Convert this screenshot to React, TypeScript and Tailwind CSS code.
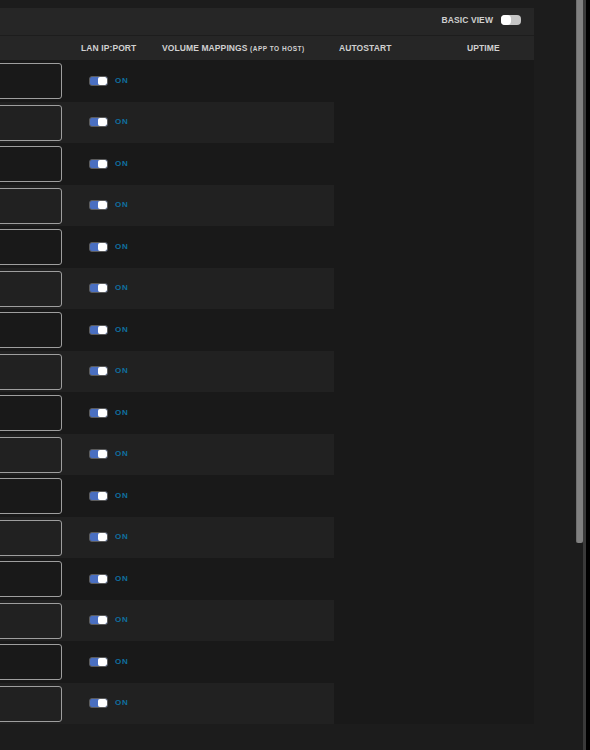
import React from "react";

const font = { fontFamily: '"Liberation Sans", Arial, sans-serif' };

const rows = Array.from({ length: 16 }, (_, i) => i);

function OnSwitch() {
  return (
    <div className="flex items-center">
      <div className="flex h-[10px] w-[19px] justify-end overflow-hidden rounded-[3px] border border-[#5c5c5c] bg-[#4a6fc1]">
        <div className="h-full w-[9px] rounded-[2px] bg-white" />
      </div>
      <span className="ml-[7px] text-[8px] font-bold tracking-[0.8px] text-[#0f6fa0]">ON</span>
    </div>
  );
}

function ContainerRow({ index }: { index: number }) {
  const shaded = index % 2 === 1;

  return (
    <div className="flex h-[41.5px]">
      <div className={`flex w-[334px] ${shaded ? "bg-[#212121]" : "bg-[#191919]"}`}>
        {/* name cell, mostly scrolled off to the left */}
        <div className="flex w-[62px] justify-end overflow-hidden pt-[3px]">
          <div className="h-[36px] w-[120px] shrink-0 rounded-[3px] border border-[#9e9e9e]" />
        </div>
        <div className="flex items-center pl-[27px]">
          <OnSwitch />
        </div>
      </div>
      <div className="w-[200px] bg-[#191919]" />
    </div>
  );
}

export default function App() {
  return (
    <div className="flex h-[750px] w-[590px] overflow-hidden bg-[#1c1c1c]" style={font}>
      <div className="w-[576px] pt-2">
        <div className="w-[534px]">
          <div className="flex h-[27px] items-center justify-end bg-[#262626] pb-[3px] pr-[13px]">
            <span className="text-[8.5px] font-bold tracking-[0.1px] text-[#cfcfcf]">BASIC VIEW</span>
            <div className="ml-[8px] flex h-[10px] w-[20px] rounded-[4px] bg-[#c4c4c4]">
              <div className="h-full w-[10px] rounded-[4px] bg-white" />
            </div>
          </div>
          <div className="h-px bg-[#1d1d1d]" />
          <div className="flex h-[24px] items-center bg-[#262626] text-[8.5px] font-bold tracking-[0.1px] text-[#d0d0d0]">
            <span className="ml-[81px] w-[81px]">LAN IP:PORT</span>
            <span className="w-[177px]">
              VOLUME MAPPINGS{" "}
              <span className="text-[6.5px] tracking-[0.5px]">(APP TO HOST)</span>
            </span>
            <span className="w-[128px]">AUTOSTART</span>
            <span>UPTIME</span>
          </div>
          {rows.map((i) => (
            <ContainerRow key={i} index={i} />
          ))}
        </div>
      </div>
      {/* page scrollbar */}
      <div className="flex w-[14px]">
        <div className="w-[7px]">
          <div className="h-[543px] rounded-b-[2px] border-l border-[#6e6e6e] bg-[#808080]" />
        </div>
        <div className="w-[3px] bg-[#3a3a3a]" />
        <div className="w-[4px] bg-black" />
      </div>
    </div>
  );
}
